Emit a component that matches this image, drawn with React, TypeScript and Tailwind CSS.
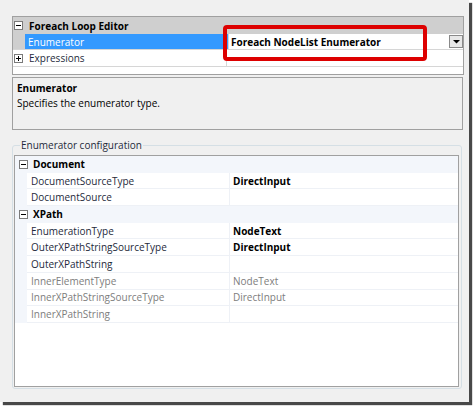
import React from 'react'

const font = { fontFamily: '"Open Sans", "Noto Sans", sans-serif' }

function MinusBox({ plus = false }: { plus?: boolean }) {
  return (
    <span className="relative inline-block h-[9px] w-[9px] border border-[#7a7a7a] bg-white">
      <span className="absolute left-[1px] top-[3px] h-[1px] w-[5px] bg-black" />
      {plus && <span className="absolute left-[3px] top-[1px] h-[5px] w-[1px] bg-black" />}
    </span>
  )
}

type Row =
  | { kind: 'cat'; label: string }
  | { kind: 'prop'; label: string; value?: string; bold?: boolean; dim?: boolean }

const rows: Row[] = [
  { kind: 'cat', label: 'Document' },
  { kind: 'prop', label: 'DocumentSourceType', value: 'DirectInput', bold: true },
  { kind: 'prop', label: 'DocumentSource' },
  { kind: 'cat', label: 'XPath' },
  { kind: 'prop', label: 'EnumerationType', value: 'NodeText', bold: true },
  { kind: 'prop', label: 'OuterXPathStringSourceType', value: 'DirectInput', bold: true },
  { kind: 'prop', label: 'OuterXPathString' },
  { kind: 'prop', label: 'InnerElementType', value: 'NodeText', dim: true },
  { kind: 'prop', label: 'InnerXPathStringSourceType', value: 'DirectInput', dim: true },
  { kind: 'prop', label: 'InnerXPathString', dim: true },
]

function ConfigGrid() {
  return (
    <div className="flex h-[232px] flex-col border border-[#a0a0a0] bg-white">
      {rows.map((r, i) =>
        r.kind === 'cat' ? (
          <div key={i} className="flex h-[16.7px] items-center bg-[#f3f6fb]">
            <span className="flex w-[13px] justify-end">
              <MinusBox />
            </span>
            <span className="pl-[5px] font-bold text-black">{r.label}</span>
          </div>
        ) : (
          <div key={i} className="flex h-[16.7px]">
            <span className="w-[12px] bg-[#f3f6fb]" />
            <span
              className={
                'flex w-[202px] items-center border-b border-[#eef1f6] pl-[4px] ' +
                (r.dim ? 'text-[#7d7d7d]' : 'text-[#1e2a3b]')
              }
            >
              {r.label}
            </span>
            <span
              className={
                'flex flex-1 items-center border-b border-l border-[#eef1f6] pl-[3px] ' +
                (r.dim ? 'text-[#7d7d7d]' : 'text-black') +
                (r.bold ? ' font-bold' : '')
              }
            >
              {r.value}
            </span>
          </div>
        )
      )}
    </div>
  )
}

export default function App() {
  return (
    <div className="h-[407px] w-[474px] bg-white text-[10px] leading-none" style={font}>
      <div className="relative flex h-[402px] w-[469px] flex-col bg-[#f0f0f0] pl-[12px] pt-[16px] shadow-[3px_3px_1px_rgba(40,40,40,0.85)]">
        {/* top property grid */}
        <div className="flex w-[452px] flex-col border border-[#a0a0a0] bg-white">
          <div className="flex h-[17px] items-center bg-[#cfcfcf]">
            <span className="flex w-[10px] justify-end">
              <MinusBox />
            </span>
            <span className="pl-[6px] font-bold text-black">Foreach Loop Editor</span>
          </div>
          <div className="flex h-[16px] border-b border-[#d6d6d6]">
            <span className="w-[12px] bg-[#cfcfcf]" />
            <span className="flex w-[203px] items-center bg-[#3399ff] pl-[3px] text-white">Enumerator</span>
            <span className="flex flex-1 items-center justify-between border-l border-[#d6d6d6] pl-[2px]">
              <span className="font-bold text-black">Foreach NodeList Enumerator</span>
              <span className="flex h-[13px] w-[14px] items-center justify-center border border-[#8a8a8a] bg-[#e8e8e8]">
                <svg width="7" height="5" viewBox="0 0 7 5">
                  <path d="M0 1h7L3.5 4.5z" fill="#000" />
                </svg>
              </span>
            </span>
          </div>
          <div className="flex h-[17px] items-center border-b border-[#d6d6d6]">
            <span className="flex w-[10px] justify-end">
              <MinusBox plus />
            </span>
            <span className="flex w-[203px] pl-[6px] text-[#1e2a3b]">Expressions</span>
            <span className="h-full flex-1 border-l border-[#d6d6d6]" />
          </div>
          <div className="h-[7px]" />
        </div>

        {/* description */}
        <div className="mt-[2px] flex h-[53px] w-[451px] flex-col border border-[#a0a0a0] bg-[#f0f0f0] px-[4px] pt-[5px]">
          <span className="font-bold text-black">Enumerator</span>
          <span className="mt-[5px] text-black">Specifies the enumerator type.</span>
        </div>

        {/* group box */}
        <fieldset className="mt-[10px] w-[450px] rounded-[3px] border border-[#d5dfe5] pb-[1px] pl-[1px] pr-[2px]">
          <legend className="ml-[6px] px-[1px] text-[#1e2a3b]">Enumerator configuration</legend>
          <div className="mt-[5px]">
            <ConfigGrid />
          </div>
        </fieldset>

        {/* highlight */}
        <div className="absolute left-[223px] top-[25px] h-[36px] w-[204px] rounded-[4px] border-[4px] border-[#dd0000]" />
      </div>
    </div>
  )
}
